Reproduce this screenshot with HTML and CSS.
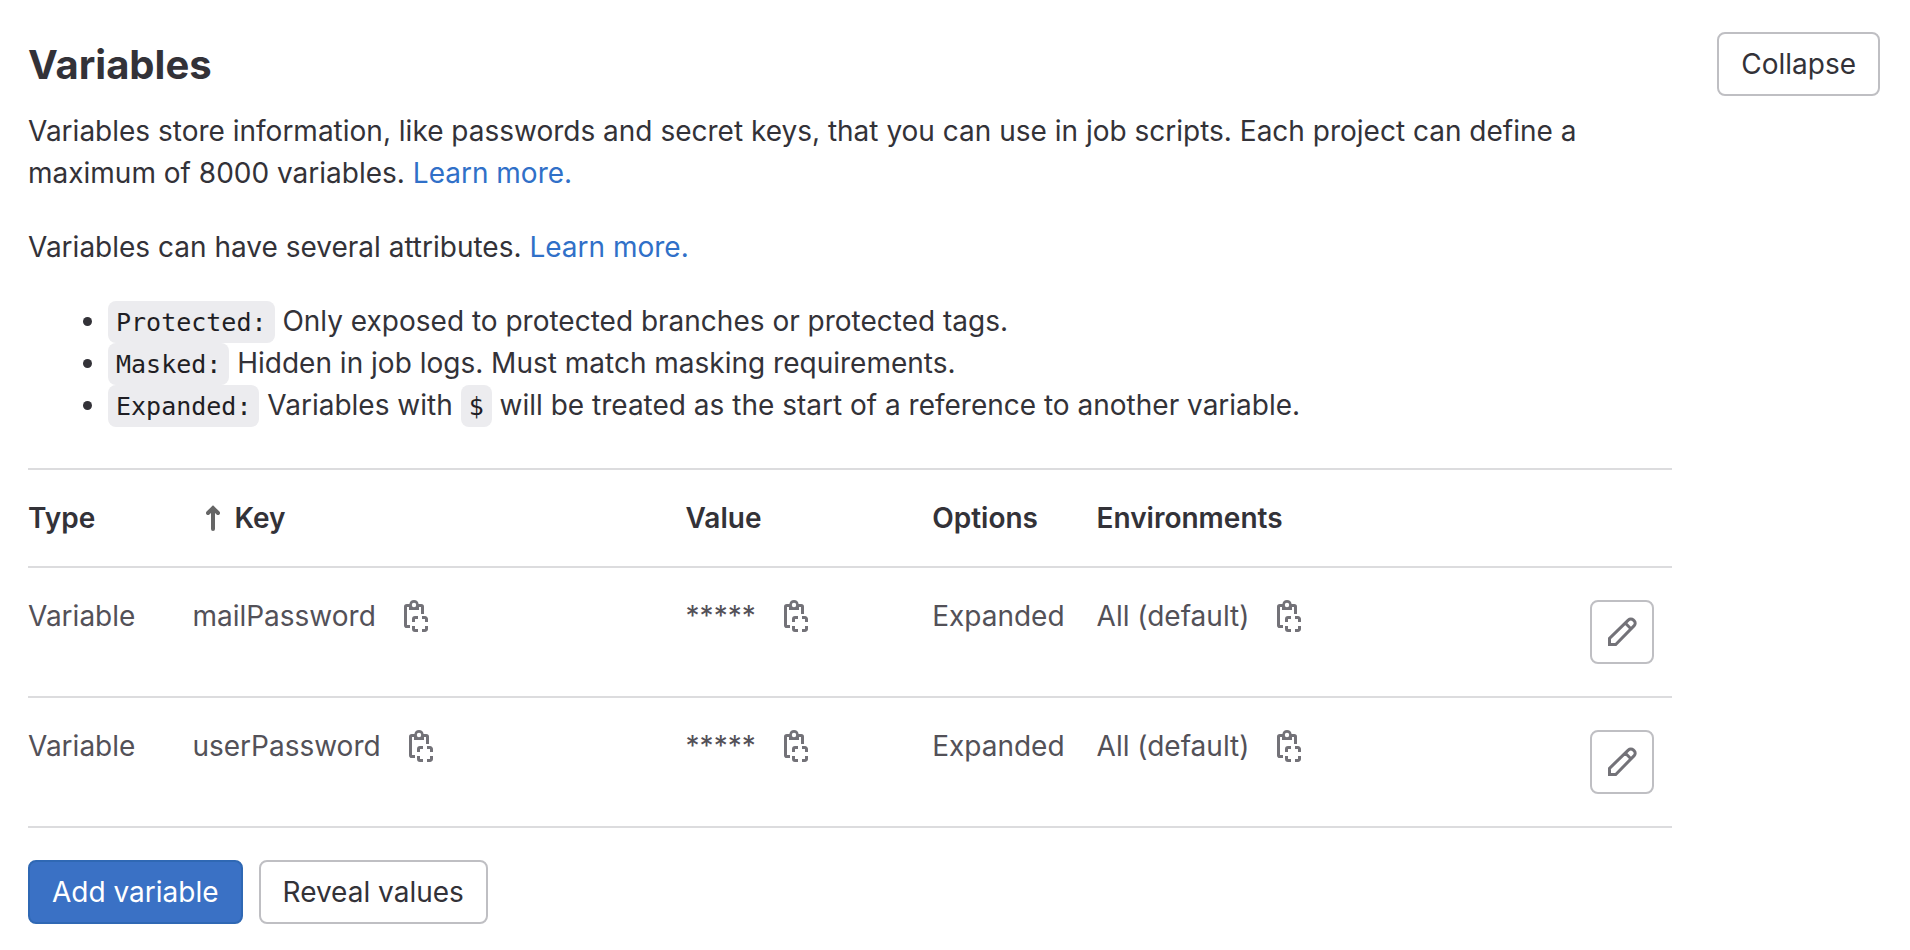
FILE: index.html
```html
<!DOCTYPE html>
<html lang="en">
<head>
<meta charset="utf-8">
<title>Variables</title>
<link rel="stylesheet" href="styles.css">
</head>
<body>
<svg class="sprite" aria-hidden="true">
  <symbol id="copy" viewBox="0 0 16 16">
    <g fill="none" stroke="currentColor" stroke-width="1.5">
      <path d="M5 13.25H3.4a.65.65 0 0 1-.65-.65V3.4c0-.36.29-.65.65-.65H5M9 2.75h1.6c.36 0 .65.29.65.65V7"/>
      <path d="M9 8.75H7.5a.75.75 0 0 0-.75.75V11M11 8.75h1.5a.75.75 0 0 1 .75.75V11M6.75 13v1.5c0 .41.34.75.75.75H9M13.25 13v1.5a.75.75 0 0 1-.75.75H11"/>
    </g>
    <path fill="currentColor" fill-rule="evenodd" d="M7 0A2.4 2.4 0 0 0 4.7 2H4.5V5H9.5V2H9.3A2.4 2.4 0 0 0 7 0ZM7 1.4A1.1 1.1 0 0 1 7 3.6A1.1 1.1 0 0 1 7 1.4Z"/>
  </symbol>
  <symbol id="pencil" viewBox="0 0 16 16">
    <path fill="none" stroke="currentColor" stroke-width="1.5" d="M1.75 14.25v-3.1l9.5-9.2a1.65 1.65 0 0 1 2.35 0l.5.5a1.65 1.65 0 0 1 0 2.35l-9.25 9.45zM9.6 3.5l3.1 3.1"/>
  </symbol>
</svg>
<main class="settings">
  <header class="settings-header">
    <h1 class="title">Variables</h1>
    <button class="btn" type="button">Collapse</button>
  </header>
  <div class="content">
    <p class="text">Variables store information, like passwords and secret keys, that you can use in job scripts. Each project can define a maximum of 8000 variables. <a class="link" href="#">Learn more.</a></p>
    <p class="text">Variables can have several attributes. <a class="link" href="#">Learn more.</a></p>
    <ul class="attributes">
      <li><code class="code">Protected:</code> Only exposed to protected branches or protected tags.</li>
      <li><code class="code">Masked:</code> Hidden in job logs. Must match masking requirements.</li>
      <li><code class="code">Expanded:</code> Variables with <code class="code">$</code> will be treated as the start of a reference to another variable.</li>
    </ul>
    <table class="variables">
      <colgroup>
        <col class="col-s"><col class="col-l"><col class="col-m"><col class="col-s"><col class="col-env"><col>
      </colgroup>
      <thead>
        <tr>
          <th scope="col">Type</th>
          <th scope="col" aria-sort="ascending"><div class="sort"><svg class="arrow" viewBox="0 0 14 26" aria-hidden="true"><path d="M7 24V3M2 8l5-5 5 5"/></svg>Key</div></th>
          <th scope="col">Value</th>
          <th scope="col">Options</th>
          <th scope="col">Environments</th>
          <th></th>
        </tr>
      </thead>
      <tbody>
        <tr>
          <td>Variable</td>
          <td><div class="cell">mailPassword<button class="copy" type="button" aria-label="Copy key"><svg class="icon"><use href="#copy"/></svg></button></div></td>
          <td><div class="cell">*****<button class="copy" type="button" aria-label="Copy value"><svg class="icon"><use href="#copy"/></svg></button></div></td>
          <td>Expanded</td>
          <td><div class="cell">All (default)<button class="copy" type="button" aria-label="Copy environment"><svg class="icon"><use href="#copy"/></svg></button></div></td>
          <td class="actions"><button class="btn btn-icon" type="button" aria-label="Edit"><svg class="icon"><use href="#pencil"/></svg></button></td>
        </tr>
        <tr>
          <td>Variable</td>
          <td><div class="cell">userPassword<button class="copy" type="button" aria-label="Copy key"><svg class="icon"><use href="#copy"/></svg></button></div></td>
          <td><div class="cell">*****<button class="copy" type="button" aria-label="Copy value"><svg class="icon"><use href="#copy"/></svg></button></div></td>
          <td>Expanded</td>
          <td><div class="cell">All (default)<button class="copy" type="button" aria-label="Copy environment"><svg class="icon"><use href="#copy"/></svg></button></div></td>
          <td class="actions"><button class="btn btn-icon" type="button" aria-label="Edit"><svg class="icon"><use href="#pencil"/></svg></button></td>
        </tr>
      </tbody>
    </table>
    <div class="buttons">
      <button class="btn btn-confirm" type="button">Add variable</button>
      <button class="btn" type="button">Reveal values</button>
    </div>
  </div>
</main>
</body>
</html>
```

FILE: styles.css
```css
* { box-sizing: border-box; }

body {
  margin: 0;
  background: #fff;
  color: #333238;
  font: 28px/42px Inter, "Liberation Sans", sans-serif;
}

.sprite { position: absolute; width: 0; height: 0; }

.settings { padding: 32px 30px 24px 28px; }

.settings-header {
  display: flex;
  align-items: center;
  justify-content: space-between;
  margin-bottom: 14px;
}

.title { margin: 0; padding-top: 2px; font-size: 40px; font-weight: 700; line-height: 48px; }

.content { margin-right: 208px; }

.text { margin: 0 0 32px; }

.link { color: #3070c8; text-decoration: none; }

.attributes { margin: 0 0 42px; padding-left: 80px; }

.code {
  padding: 7px 8px 6px;
  border-radius: 8px;
  background: #ececef;
  color: #1f1e24;
  font: 25px/32px "DejaVu Sans Mono", monospace;
}

.variables {
  width: 100%;
  border-collapse: separate;
  border-spacing: 0;
  border-top: 2px solid #dcdcde;
  table-layout: fixed;
}

.col-s { width: 10%; }
.col-l { width: 30%; }
.col-m { width: 15%; }
.col-env { width: 20%; }

.variables th,
.variables td {
  padding: 32px 0;
  border-bottom: 2px solid #dcdcde;
  line-height: 32px;
  text-align: left;
  vertical-align: top;
  white-space: nowrap;
}

.variables th { font-weight: 600; }
.variables td { color: #535158; }
.variables .actions { padding-right: 18px; text-align: right; }

.sort { display: flex; align-items: center; gap: 14px; padding-left: 14px; }

.arrow {
  width: 14px;
  height: 26px;
  fill: none;
  stroke: #666;
  stroke-width: 4;
  stroke-linecap: round;
}

.cell { display: flex; align-items: center; gap: 24px; }

.copy {
  display: flex;
  padding: 0;
  border: 0;
  background: none;
  color: #737278;
}

.icon { display: block; width: 32px; height: 32px; }

.btn {
  height: 64px;
  padding: 0 22px;
  border: 2px solid #bfbfc3;
  border-radius: 8px;
  background: #fff;
  color: #333238;
  font: inherit;
}

.btn-icon { display: inline-block; width: 64px; padding: 0 14px; color: #737278; vertical-align: top; }

.btn-confirm { border-color: #2f68b4; background: #3a71c5; color: #fff; }

.buttons { display: flex; gap: 16px; margin-top: 32px; }
```
